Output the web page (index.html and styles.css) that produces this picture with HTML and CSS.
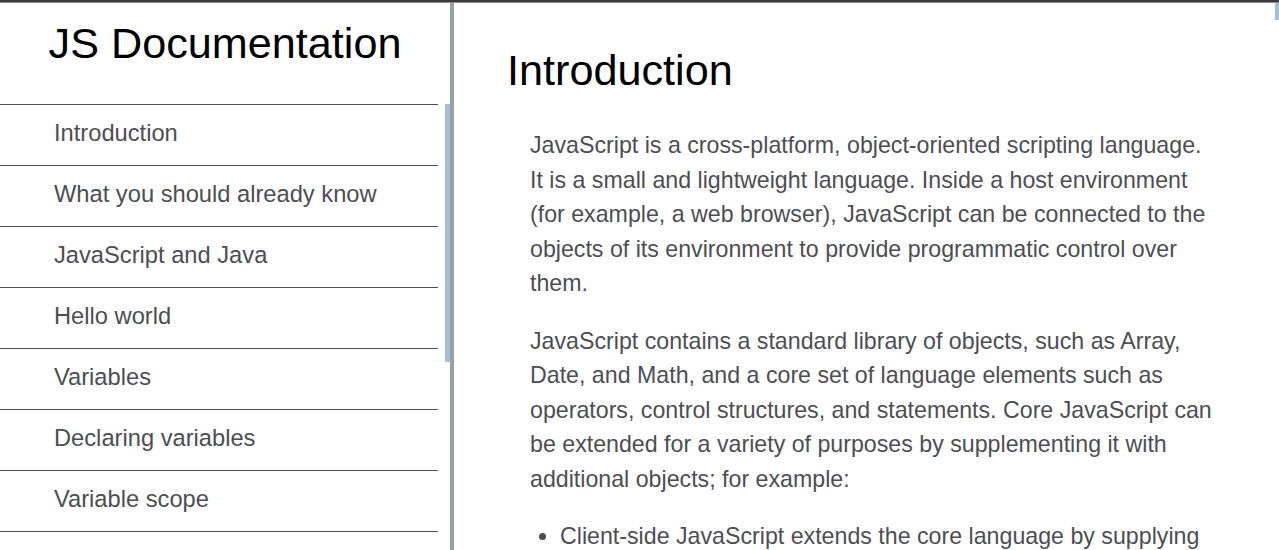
FILE: index.html
```html
<!DOCTYPE html>
<html lang="en">
<head>
<meta charset="utf-8">
<title>JS Documentation</title>
<link rel="stylesheet" href="styles.css">
</head>
<body>
<div class="topbar"></div>
<div class="layout">
  <nav class="navbar">
    <header class="nav-header">JS Documentation</header>
    <div class="nav-scroll">
      <ul class="nav-list">
        <li><a class="nav-link" href="#Introduction">Introduction</a></li>
        <li><a class="nav-link" href="#What_you_should_already_know">What you should already know</a></li>
        <li><a class="nav-link" href="#JavaScript_and_Java">JavaScript and Java</a></li>
        <li><a class="nav-link" href="#Hello_world">Hello world</a></li>
        <li><a class="nav-link" href="#Variables">Variables</a></li>
        <li><a class="nav-link" href="#Declaring_variables">Declaring variables</a></li>
        <li><a class="nav-link" href="#Variable_scope">Variable scope</a></li>
        <li class="nav-end"></li>
      </ul>
      <div class="nav-thumb"></div>
    </div>
  </nav>
  <main class="main-doc">
    <section class="main-section" id="Introduction">
      <header class="section-title">Introduction</header>
      <article class="section-body">
        <p>JavaScript is a cross-platform, object-oriented scripting language. It is a small and lightweight language. Inside a host environment (for example, a web browser), JavaScript can be connected to the objects of its environment to provide programmatic control over them.</p>
        <p>JavaScript contains a standard library of objects, such as Array, Date, and Math, and a core set of language elements such as operators, control structures, and statements. Core JavaScript can be extended for a variety of purposes by supplementing it with additional objects; for example:</p>
        <ul class="bullets">
          <li>Client-side JavaScript extends the core language by supplying</li>
        </ul>
      </article>
    </section>
  </main>
  <div class="page-thumb"></div>
</div>
</body>
</html>
```
FILE: styles.css
```css
html, body {
  margin: 0;
  padding: 0;
  height: 100%;
  overflow: hidden;
}
body {
  font-family: "Liberation Sans", Arial, sans-serif;
  color: #4d4e53;
  background: #fff;
  display: flex;
  flex-direction: column;
}
.topbar {
  height: 3px;
  flex: none;
  background: linear-gradient(#3b3b3b 0, #3b3b3b 2px, #8c8c8c 2px);
}
.layout {
  flex: 1;
  display: flex;
  position: relative;
  min-height: 0;
}
.navbar {
  width: 450px;
  flex: none;
  border-right: 4px solid rgba(0, 22, 22, 0.4);
  display: flex;
  flex-direction: column;
  min-height: 0;
}
.nav-header {
  height: 101px;
  box-sizing: border-box;
  padding-top: 16px;
  text-align: center;
  font-size: 43.2px;
  color: #000;
}
.nav-scroll {
  flex: 1;
  display: flex;
  position: relative;
  min-height: 0;
  overflow: hidden;
}
.nav-list {
  list-style: none;
  margin: 0;
  padding: 0;
  width: 438px;
}
.nav-list li {
  border-top: 1px solid #4d4e53;
}
.nav-link {
  display: block;
  height: 60px;
  box-sizing: border-box;
  padding: 15px 0 0 54px;
  font-size: 23.7px;
  color: #4d4e53;
  text-decoration: none;
}
.nav-thumb {
  position: absolute;
  top: 0;
  right: 0;
  width: 5px;
  height: 258px;
  background: #a6bfd7;
}
.main-doc {
  flex: 1;
  padding: 43px 0 0 53px;
  min-width: 0;
}
.section-title {
  font-size: 43.2px;
  color: #000;
}
.section-body {
  margin: 0 0 0 23px;
  width: 688px;
  font-size: 23.2px;
  line-height: 34.5px;
  padding-top: 33px;
}
.section-body p {
  margin: 0 0 23.2px;
}
.bullets {
  margin: 0;
  padding-left: 30px;
}
.page-thumb {
  position: absolute;
  top: 0;
  right: 0;
  width: 4px;
  height: 17px;
  background: #a6bfd7;
}
```
